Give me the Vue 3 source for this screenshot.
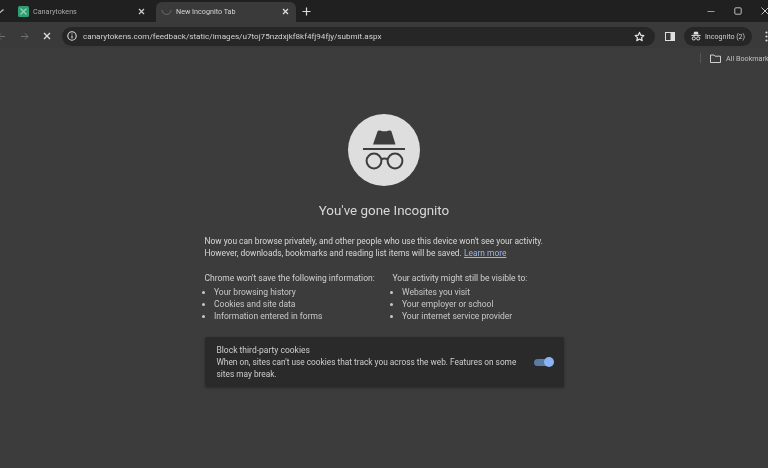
<template>
  <div class="browser">
    <div class="tabstrip">
      <svg class="chev" width="8" height="8" viewBox="0 0 8 8"><path d="M0.5 2.5 L4 5.5 L7.5 2.5" fill="none" stroke="#c4c4c4" stroke-width="1.3" /></svg>
      <div class="tab">
        <svg class="favicon" width="11" height="11" viewBox="0 0 11 11">
          <rect width="11" height="11" rx="1.5" fill="#2f9e73" />
          <path d="M2.5 2.5 L8.5 8.5 M8.5 2.5 L2.5 8.5" stroke="#8fd8b8" stroke-width="1.1" />
        </svg>
        <span class="tab-title dim">Canarytokens</span>
        <svg class="tab-x" width="7" height="7" viewBox="0 0 7 7"><path d="M1 1 L6 6 M6 1 L1 6" stroke="#d0d0d0" stroke-width="1.2" /></svg>
      </div>
      <div class="tab active">
        <svg class="spinner" width="11" height="11" viewBox="0 0 11 11"><path d="M1 4 A4.5 4.5 0 0 0 10 4" fill="none" stroke="#6b6b6b" stroke-width="1" /></svg>
        <span class="tab-title">New Incognito Tab</span>
        <svg class="tab-x" width="7" height="7" viewBox="0 0 7 7"><path d="M1 1 L6 6 M6 1 L1 6" stroke="#e0e0e0" stroke-width="1.2" /></svg>
      </div>
      <svg class="plus" width="9" height="9" viewBox="0 0 9 9"><path d="M4.5 0.5 V8.5 M0.5 4.5 H8.5" stroke="#dcdcdc" stroke-width="1.2" /></svg>
      <div class="winctl">
        <svg width="8" height="8" viewBox="0 0 8 8"><path d="M0.5 4.5 H7.5" stroke="#9c9c9c" stroke-width="1" /></svg>
        <svg width="8" height="8" viewBox="0 0 8 8"><rect x="0.8" y="0.8" width="6.4" height="6.4" rx="1" fill="none" stroke="#bdbdbd" stroke-width="1" /></svg>
        <svg width="8" height="8" viewBox="0 0 8 8"><path d="M0.5 0.5 L7.5 7.5 M7.5 0.5 L0.5 7.5" stroke="#c4c4c4" stroke-width="1" /></svg>
      </div>
    </div>

    <div class="toolbar">
      <svg class="nav" width="9" height="9" viewBox="0 0 9 9"><path d="M8 4.5 H1 M4 1.5 L1 4.5 L4 7.5" fill="none" stroke="#6f6f6f" stroke-width="1" /></svg>
      <svg class="nav fwd" width="9" height="9" viewBox="0 0 9 9"><path d="M1 4.5 H8 M5 1.5 L8 4.5 L5 7.5" fill="none" stroke="#6f6f6f" stroke-width="1" /></svg>
      <svg class="nav stop" width="8" height="8" viewBox="0 0 8 8"><path d="M1 1 L7 7 M7 1 L1 7" stroke="#e0e0e0" stroke-width="1.3" /></svg>
      <div class="omnibox">
        <svg width="10" height="10" viewBox="0 0 10 10">
          <circle cx="5" cy="5" r="4.2" fill="none" stroke="#dcdcdc" stroke-width="1.1" />
          <path d="M5 4.4 V7.4 M5 2.6 V3.5" stroke="#dcdcdc" stroke-width="1.1" />
        </svg>
        <span class="url">canarytokens.com/feedback/static/images/u7toj75nzdxjkf8kf4fj94fjy/submit.aspx</span>
        <svg class="star" width="11" height="11" viewBox="0 0 24 24"><path d="M12 3 L14.8 9.2 L21.5 9.9 L16.5 14.4 L17.9 21 L12 17.6 L6.1 21 L7.5 14.4 L2.5 9.9 L9.2 9.2 Z" fill="none" stroke="#e6e6e6" stroke-width="2.6" stroke-linejoin="round" /></svg>
      </div>
      <svg class="side" width="10" height="9" viewBox="0 0 10 9">
        <rect x="0.5" y="0.5" width="9" height="8" fill="none" stroke="#e0e0e0" />
        <rect x="5.5" y="0.5" width="4" height="8" fill="#e0e0e0" />
      </svg>
      <div class="profile">
        <svg width="10" height="10" viewBox="0 0 10 10">
          <path d="M3.2 0.8 H6.8 L7.6 3.6 H2.4 Z" fill="#e0e0e0" />
          <path d="M0.4 4.4 H9.6" stroke="#e0e0e0" />
          <circle cx="2.8" cy="7.4" r="1.6" fill="none" stroke="#e0e0e0" />
          <circle cx="7.2" cy="7.4" r="1.6" fill="none" stroke="#e0e0e0" />
        </svg>
        <span>Incognito (2)</span>
      </div>
      <svg class="dots" width="3" height="11" viewBox="0 0 3 11"><circle cx="1.5" cy="1.5" r="1.1" fill="#d8d8d8" /><circle cx="1.5" cy="5.5" r="1.1" fill="#d8d8d8" /><circle cx="1.5" cy="9.5" r="1.1" fill="#d8d8d8" /></svg>
    </div>

    <div class="bookmarks">
      <div class="sep"></div>
      <svg width="11" height="9" viewBox="0 0 11 9"><path d="M0.5 1 H4 L5 2.2 H10.5 V8.5 H0.5 Z" fill="none" stroke="#cfcfcf" stroke-width="1" /></svg>
      <span>All Bookmarks</span>
    </div>

    <main class="content">
      <div class="badge">
        <svg width="44" height="40" viewBox="0 0 44 40">
          <path d="M15.5 1.5 Q16 0 18 0.5 L20.5 1.2 H24.5 L27 0.5 Q29 0 29.5 1.5 L33.5 14.5 H11 Z" fill="#3d3d3d" />
          <rect x="1" y="18" width="42" height="2" fill="#3d3d3d" />
          <circle cx="12" cy="31" r="7.4" fill="none" stroke="#3d3d3d" stroke-width="2" />
          <circle cx="33" cy="31" r="7.4" fill="none" stroke="#3d3d3d" stroke-width="2" />
          <path d="M19 29.5 Q22.5 27.5 26 29.5" fill="none" stroke="#3d3d3d" stroke-width="2" />
        </svg>
      </div>
      <h1>You've gone Incognito</h1>
      <p class="intro">Now you can browse privately, and other people who use this device won't see your activity.<br />However, downloads, bookmarks and reading list items will be saved. <a>Learn more</a></p>
      <div class="columns">
        <div v-for="col in columns" :key="col.title" class="col">
          <div class="col-title">{{ col.title }}</div>
          <ul>
            <li v-for="item in col.items" :key="item">{{ item }}</li>
          </ul>
        </div>
      </div>
      <div class="cookies">
        <div class="cookies-text">
          <div>Block third-party cookies</div>
          <div class="cookies-desc">When on, sites can't use cookies that track you across the web. Features on some sites may break.</div>
        </div>
        <div class="toggle"><div class="knob"></div></div>
      </div>
    </main>
  </div>
</template>

<script setup>
const columns = [
  {
    title: "Chrome won't save the following information:",
    items: ['Your browsing history', 'Cookies and site data', 'Information entered in forms'],
  },
  {
    title: 'Your activity might still be visible to:',
    items: ['Websites you visit', 'Your employer or school', 'Your internet service provider'],
  },
]
</script>

<style>
html, body { background: #3c3c3c; overflow: hidden; }
</style>

<style scoped>
.browser {
  width: 768px;
  height: 468px;
  overflow: hidden;
  display: flex;
  flex-direction: column;
  background: #3c3c3c;
  color: #dcdcdc;
  font-family: Roboto, "Liberation Sans", sans-serif;
  font-size: 8.5px;
  filter: blur(0.35px);
}

.tabstrip {
  height: 22px;
  flex: none;
  display: flex;
  align-items: flex-end;
  background: #202020;
}
.chev { align-self: center; margin-left: -4px; margin-right: 10px; }
.tab {
  width: 142px;
  height: 19px;
  display: flex;
  align-items: center;
  padding: 0 11px 2px 4px;
  box-sizing: border-box;
  gap: 4px;
}
.tab.active {
  background: #3a3a3a;
  border-radius: 6px 6px 0 0;
  width: 140px;
  padding-left: 5px;
  padding-right: 7px;
  height: 20px;
}
.tab-title { flex: 1; white-space: nowrap; font-size: 7.2px; color: #d4d4d4; }
.tab-title.dim { color: #a8a8a8; }
.plus { align-self: center; margin-left: 6px; }
.winctl {
  margin-left: auto;
  align-self: center;
  display: flex;
  gap: 19px;
  margin-right: -1px;
}

.toolbar {
  height: 26px;
  flex: none;
  display: flex;
  align-items: center;
  background: #3a3a3a;
  padding-top: 2px;
  box-sizing: border-box;
}
.nav { margin-left: -3px; flex: none; }
.fwd { margin-left: 14px; }
.stop { margin-left: 14px; }
.omnibox {
  width: 593px;
  height: 19px;
  margin-left: 11px;
  border-radius: 10px;
  background: #262626;
  display: flex;
  align-items: center;
  padding: 0 10px 0 5px;
  box-sizing: border-box;
  gap: 6px;
  flex: none;
}
.url { flex: 1; white-space: nowrap; color: #d2d2d2; font-size: 8.1px; }
.side { margin-left: 10px; flex: none; }
.profile {
  width: 68px;
  height: 19px;
  margin-left: 9px;
  border-radius: 10px;
  background: #262626;
  display: flex;
  align-items: center;
  justify-content: center;
  gap: 4px;
  font-size: 7.1px;
  color: #cfcfcf;
  flex: none;
}
.dots { margin-left: 13px; flex: none; }

.bookmarks {
  height: 22px;
  flex: none;
  display: flex;
  align-items: center;
  gap: 5px;
  padding-left: 700px;
  padding-bottom: 2px;
  background: #3c3c3c;
  font-size: 7.2px;
  color: #c0c0c0;
  white-space: nowrap;
  box-sizing: border-box;
  width: 768px;
}
.bookmarks svg, .bookmarks span, .sep { flex: none; }
.sep { width: 1px; height: 10px; background: #555; margin-right: 4px; }

.content {
  display: flex;
  flex-direction: column;
  width: 359px;
  margin: 0 auto;
}
.badge {
  width: 72px;
  height: 72px;
  margin: 44px auto 0;
  border-radius: 50%;
  background: #dedede;
  display: flex;
  align-items: center;
  justify-content: center;
}
h1 {
  margin: 16px 0 0;
  text-align: center;
  font-size: 13.4px;
  font-weight: 400;
  line-height: 18px;
  color: #d8d8d8;
}
.intro {
  margin: 15px 0 0;
  font-size: 8.42px;
  line-height: 12.2px;
  color: #d8d8d8;
}
.intro a { color: #9db4e6; text-decoration: underline; }
.columns { display: flex; margin-top: 13px; gap: 18px; }
.col { flex: none; width: 170px; line-height: 12.2px; }
.col-title { margin-bottom: 1px; color: #d0d0d0; white-space: nowrap; }
ul { margin: 0; padding: 0 0 0 9.5px; color: #c8c8c8; }
li { white-space: nowrap; }
.cookies {
  margin-top: 15px;
  height: 50px;
  background: #2a2a2a;
  border-radius: 2px;
  box-shadow: 0 1px 3px rgba(0, 0, 0, 0.3);
  display: flex;
  align-items: center;
  padding: 0 11px 0 12px;
  box-sizing: border-box;
  line-height: 12.2px;
  color: #cecece;
}
.cookies-text { width: 306px; }
.cookies-desc { font-size: 8.3px; }
.toggle {
  margin-left: auto;
  width: 19px;
  height: 7px;
  border-radius: 4px;
  background: #5b7aa8;
  position: relative;
}
.knob {
  position: absolute;
  right: -1px;
  top: -1.5px;
  width: 10px;
  height: 10px;
  border-radius: 50%;
  background: #8ab4f8;
}
</style>
